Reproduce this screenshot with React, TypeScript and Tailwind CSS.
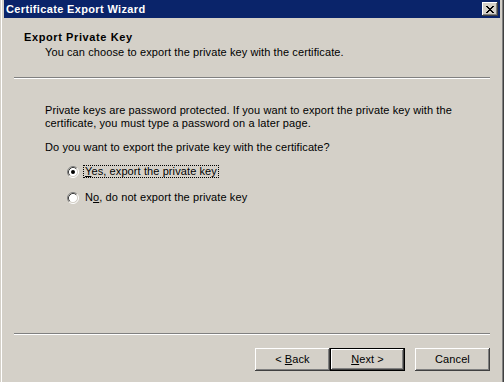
import React, { useState } from "react";

const font = { fontFamily: '"Liberation Sans", Arial, sans-serif' };

const Radio = ({ checked }: { checked: boolean }) => {
  return (
    <svg width="12" height="12" viewBox="0 0 12 12" className="shrink-0">
      <circle cx="6" cy="6" r="4.5" fill="#fff" />
      <path d="M9.89 2.11 A5.5 5.5 0 0 0 2.11 9.89" fill="none" stroke="#808080" strokeWidth="1" />
      <path d="M2.11 9.89 A5.5 5.5 0 0 0 9.89 2.11" fill="none" stroke="#fff" strokeWidth="1" />
      <path d="M9.18 2.82 A4.5 4.5 0 0 0 2.82 9.18" fill="none" stroke="#404040" strokeWidth="1" />
      <path d="M2.82 9.18 A4.5 4.5 0 0 0 9.18 2.82" fill="none" stroke="#d4d0c8" strokeWidth="1" />
      {checked && <circle cx="6" cy="6" r="2" fill="#000" />}
    </svg>
  );
};

const WizButton = ({
  children,
  isDefault,
}: {
  children: React.ReactNode;
  isDefault?: boolean;
}) => {
  if (isDefault) {
    return (
      <button className="w-[75px] h-[23px] border border-black bg-[#d4d0c8] shadow-[inset_-1px_-1px_#404040,inset_1px_1px_#fff,inset_-2px_-2px_#808080] text-[11px] tracking-[0.1px] text-black flex items-center justify-center">
        {children}
      </button>
    );
  }
  return (
    <button className="w-[75px] h-[23px] bg-[#d4d0c8] shadow-[inset_-1px_-1px_#404040,inset_1px_1px_#fff,inset_-2px_-2px_#808080,inset_2px_2px_#d4d0c8] text-[11px] tracking-[0.1px] text-black flex items-center justify-center">
      {children}
    </button>
  );
};

const App = () => {
  const [exportKey, setExportKey] = useState(true);

  return (
    <div
      className="w-[504px] h-[382px] overflow-hidden bg-[#d4d0c8] border-l border-l-[#d4d0c8] border-r border-r-[#404040]"
      style={font}
    >
      <div className="h-full flex flex-col border-l border-l-white border-r border-r-[#808080] px-[2px]">
        {/* title bar */}
        <div className="h-[18px] bg-[#0a246a] flex items-center justify-between pl-[2px] pr-[2px]">
          <span className="text-white font-bold text-[11px] leading-[13px] tracking-[0.35px]">
            Certificate Export Wizard
          </span>
          <button className="w-[16px] h-[14px] bg-[#d4d0c8] shadow-[inset_-1px_-1px_#404040,inset_1px_1px_#fff,inset_-2px_-2px_#808080] flex items-center justify-center">
            <svg width="8" height="7" viewBox="0 0 8 7" shapeRendering="crispEdges">
              <path
                d="M0 0h2v1H0zM6 0h2v1H6zM1 1h2v1H1zM5 1h2v1H5zM2 2h4v1H2zM3 3h2v1H3zM2 4h4v1H2zM1 5h2v1H1zM5 5h2v1H5zM0 6h2v1H0zM6 6h2v1H6z"
                fill="#000"
              />
            </svg>
          </button>
        </div>

        {/* header */}
        <div className="pt-[13px] pl-[20px] text-[11px] leading-[13px] text-black tracking-[0.1px]">
          <div className="font-bold tracking-[0.6px]">Export Private Key</div>
          <div className="pl-[21px] mt-[2px]">
            You can choose to export the private key with the certificate.
          </div>
        </div>
        <div className="mx-[10px] mt-[18px] h-[2px] border-t border-t-[#808080] border-b border-b-white" />

        {/* body */}
        <div className="pl-[41px] pt-[25px] text-[11px] leading-[13px] text-black tracking-[0.1px]">
          <p>
            Private keys are password protected. If you want to export the private key with the
            <br />
            certificate, you must type a password on a later page.
          </p>
          <p className="mt-[11px]">Do you want to export the private key with the certificate?</p>

          <div className="pl-[22px] mt-[11px] flex flex-col gap-[13px]">
            <label className="flex items-center gap-[4px] h-[13px]" onClick={() => setExportKey(true)}>
              <Radio checked={exportKey} />
              <span
                className={
                  exportKey
                    ? "border border-dotted border-black px-[1px] leading-[11px]"
                    : "border border-transparent px-[1px] leading-[11px]"
                }
              >
                <span className="underline">Y</span>es, export the private key
              </span>
            </label>
            <label className="flex items-center gap-[4px] h-[13px]" onClick={() => setExportKey(false)}>
              <Radio checked={!exportKey} />
              <span className="border border-transparent px-[1px] leading-[11px]">
                N<span className="underline">o</span>, do not export the private key
              </span>
            </label>
          </div>
        </div>

        <div className="flex-1" />

        {/* footer */}
        <div className="mx-[10px] h-[2px] border-t border-t-[#808080] border-b border-b-white" />
        <div className="flex justify-end pr-[10px] pt-[13px] pb-[11px]">
          <WizButton>
            &lt; <span className="underline ml-[3px]">B</span>ack
          </WizButton>
          <WizButton isDefault>
            <span className="underline">N</span>ext &gt;
          </WizButton>
          <div className="w-[10px]" />
          <WizButton>Cancel</WizButton>
        </div>
      </div>
    </div>
  );
};

export default App;
